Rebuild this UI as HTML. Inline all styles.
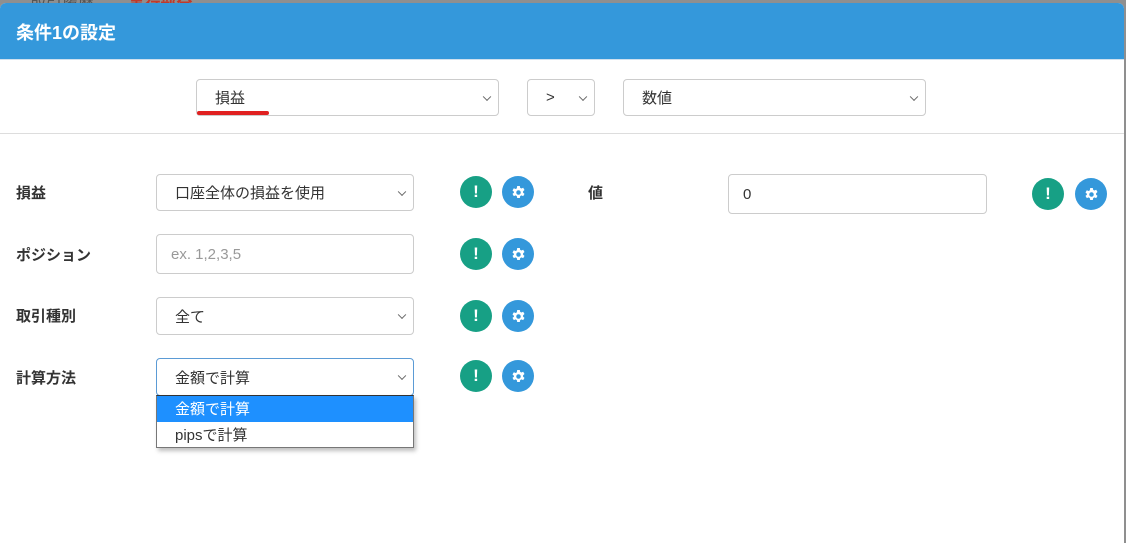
<!DOCTYPE html>
<html><head><meta charset="utf-8"><style>
*{box-sizing:border-box;margin:0;padding:0}
body{width:1126px;height:520px;overflow:hidden;background:#8f8f8f;font-family:"Liberation Sans","Noto Sans CJK JP",sans-serif;position:relative}
.top{position:absolute;left:30px;top:-10px;font-size:16px;color:#555}
.top b{color:#c0392b;margin-left:30px}
.modal{position:absolute;left:0;top:3px;width:1124px;height:540px;background:#fff;border-radius:6px 6px 0 0;overflow:hidden}
.hd{height:57px;background:#3498db;color:#fff;font-weight:bold;font-size:18px;padding:16px 16px;border-bottom:1px solid #cfe0ee}
.sel,.inp{position:absolute;border:1px solid #ccc;border-radius:4px;background:#fff;font-size:15px;color:#333;padding-left:18px;display:flex;align-items:center}
.sel::after{content:"";position:absolute;right:8px;top:50%;width:5px;height:5px;border-right:1px solid #666;border-bottom:1px solid #666;transform:translateY(-70%) rotate(45deg)}
.lbl{position:absolute;left:16px;font-size:15px;font-weight:bold;color:#333}
.g,.b{position:absolute;width:32px;height:32px;border-radius:50%;color:#fff;display:flex;align-items:center;justify-content:center;font-weight:bold;font-size:17px}
.g{background:#17a085}.b{background:#3498db}
.hr{position:absolute;left:0;right:0;height:1px;background:#ddd}
</style></head><body>
<svg width="0" height="0" style="position:absolute"><defs><symbol id="gear" viewBox="0 0 16 16"><path fill="#fff" fill-rule="evenodd" d="M6.6 1h2.8l.4 2 1.3.7 1.9-.8 1.4 2.4-1.5 1.3v1.6l1.5 1.3-1.4 2.4-1.9-.8-1.3.7-.4 2H6.6l-.4-2-1.3-.7-1.9.8-1.4-2.4 1.5-1.3V7.2L1.6 5.9 3 3.5l1.9.8 1.3-.7zM8 5.6a2.4 2.4 0 1 0 0 4.8 2.4 2.4 0 0 0 0-4.8z"/></symbol></defs></svg>
<div class="top">取引履歴 <b>実行部分</b></div>
<div class="modal">
<div class="hd">条件1の設定</div>
<div class="sel" style="left:196px;top:76px;width:303px;height:37px">損益</div>
<div style="position:absolute;left:197px;top:108px;width:72px;height:4px;background:#e02020;border-radius:2px"></div>
<div class="sel" style="left:527px;top:76px;width:68px;height:37px">&gt;</div>
<div class="sel" style="left:623px;top:76px;width:303px;height:37px">数値</div>
<div class="hr" style="top:130px"></div>

<div class="lbl" style="top:179px">損益</div>
<div class="sel" style="left:156px;top:171px;width:258px;height:37px">口座全体の損益を使用</div>
<div class="g" style="left:460px;top:173px">!</div><div class="b" style="left:502px;top:173px"><svg width="15" height="15"><use href="#gear"/></svg></div>

<div class="lbl" style="top:241px">ポジション</div>
<div class="inp" style="left:156px;top:231px;width:258px;height:40px;color:#999;padding-left:14px">ex. 1,2,3,5</div>
<div class="g" style="left:460px;top:235px">!</div><div class="b" style="left:502px;top:235px"><svg width="15" height="15"><use href="#gear"/></svg></div>

<div class="lbl" style="top:302px">取引種別</div>
<div class="sel" style="left:156px;top:294px;width:258px;height:38px">全て</div>
<div class="g" style="left:460px;top:297px">!</div><div class="b" style="left:502px;top:297px"><svg width="15" height="15"><use href="#gear"/></svg></div>

<div class="lbl" style="top:364px">計算方法</div>
<div class="sel" style="left:156px;top:355px;width:258px;height:38px;border-color:#5b9bd5">金額で計算</div>
<div class="g" style="left:460px;top:357px">!</div><div class="b" style="left:502px;top:357px"><svg width="15" height="15"><use href="#gear"/></svg></div>

<div style="position:absolute;left:156px;top:392px;width:258px;height:53px;background:#fff;border:1px solid #777;border-top:1px solid #333;box-shadow:2px 3px 4px rgba(0,0,0,.25);font-size:15px">
<div style="height:26px;background:#1e90ff;color:#fff;padding:2px 18px">金額で計算</div>
<div style="height:25px;color:#333;padding:2px 18px">pipsで計算</div>
</div>

<div class="lbl" style="left:588px;top:179px">値</div>
<div class="inp" style="left:728px;top:171px;width:259px;height:40px;padding-left:14px">0</div>
<div class="g" style="left:1032px;top:175px">!</div><div class="b" style="left:1075px;top:175px"><svg width="15" height="15"><use href="#gear"/></svg></div>
</div>
</body></html>
